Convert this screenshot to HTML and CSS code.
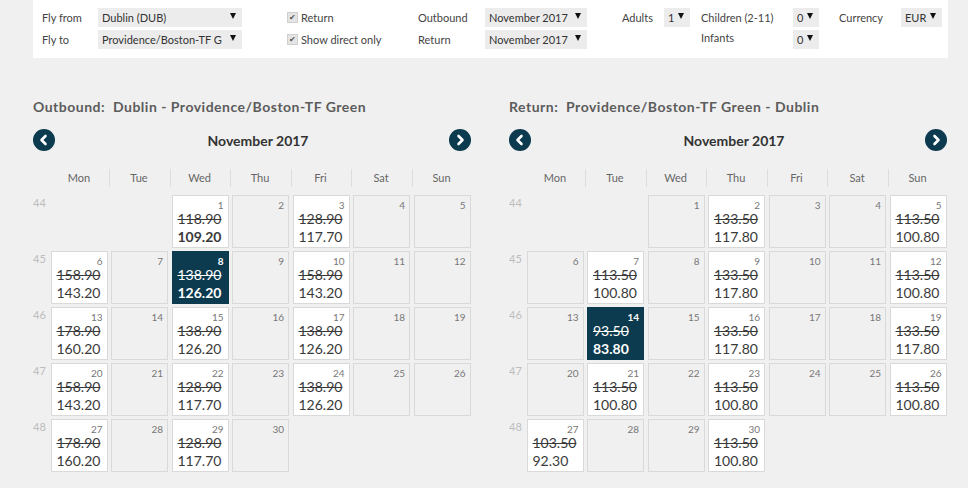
FILE: index.html
```html
<!DOCTYPE html>
<html>
<head>
    <meta charset="UTF-8">
    <title>Flight calendar</title>
    <link rel="stylesheet" href="styles.css">
</head>
<body>
    <div class="search-bar">
        <div class="group g-route">
            <div class="row"><span class="label w56">Fly from</span><span class="select w144">Dublin (DUB)<i></i></span></div>
            <div class="row"><span class="label w56">Fly to</span><span class="select w144">Providence/Boston-TF G<i></i></span></div>
        </div>
        <div class="group g-options">
            <div class="row"><span class="check">✔</span><span class="label">Return</span></div>
            <div class="row"><span class="check">✔</span><span class="label">Show direct only</span></div>
        </div>
        <div class="group g-dates">
            <div class="row"><span class="label w67">Outbound</span><span class="select w102">November 2017<i></i></span></div>
            <div class="row"><span class="label w67">Return</span><span class="select w102">November 2017<i></i></span></div>
        </div>
        <div class="group g-adults">
            <div class="row"><span class="label w42">Adults</span><span class="select w26">1<i></i></span></div>
        </div>
        <div class="group g-kids">
            <div class="row"><span class="label w92">Children (2-11)</span><span class="select w26">0<i></i></span></div>
            <div class="row"><span class="label w92 up">Infants</span><span class="select w26">0<i></i></span></div>
        </div>
        <div class="group g-currency">
            <div class="row"><span class="label w62">Currency</span><span class="select w41">EUR<i></i></span></div>
        </div>
    </div>

    <div class="calendars">
        <div class="calendar" id="outbound">
            <h2>Outbound:&nbsp; Dublin - Providence/Boston-TF Green</h2>
        </div>
        <div class="calendar" id="return">
            <h2>Return:&nbsp; Providence/Boston-TF Green - Dublin</h2>
        </div>
    </div>

    <script>
        // Prices per day: [old price, new price]
        const outbound = {
            selected: 8, cheapest: 1,
            prices: {
                1: ['118.90', '109.20'], 3: ['128.90', '117.70'],
                6: ['158.90', '143.20'], 8: ['138.90', '126.20'], 10: ['158.90', '143.20'],
                13: ['178.90', '160.20'], 15: ['138.90', '126.20'], 17: ['138.90', '126.20'],
                20: ['158.90', '143.20'], 22: ['128.90', '117.70'], 24: ['138.90', '126.20'],
                27: ['178.90', '160.20'], 29: ['128.90', '117.70']
            }
        };
        const inbound = {
            selected: 14, cheapest: null,
            prices: {
                2: ['133.50', '117.80'], 5: ['113.50', '100.80'],
                7: ['113.50', '100.80'], 9: ['133.50', '117.80'], 12: ['113.50', '100.80'],
                14: ['93.50', '83.80'], 16: ['133.50', '117.80'], 19: ['133.50', '117.80'],
                21: ['113.50', '100.80'], 23: ['113.50', '100.80'], 26: ['113.50', '100.80'],
                27: ['103.50', '92.30'], 30: ['113.50', '100.80']
            }
        };

        const days = ['Mon', 'Tue', 'Wed', 'Thu', 'Fri', 'Sat', 'Sun'];
        const arrow = dir => `
            <svg class="nav-btn" width="22" height="22" viewBox="0 0 22 22">
                <circle cx="11" cy="11" r="11" fill="#0c3a4e"/>
                <polyline points="${dir === 'prev' ? '12.5,7 8.5,11 12.5,15' : '9.5,7 13.5,11 9.5,15'}"
                    fill="none" stroke="#fff" stroke-width="2.6" stroke-linecap="round" stroke-linejoin="round"/>
            </svg>`;

        function buildCalendar(el, data) {
            let html = `
                <div class="month-nav">${arrow('prev')}<span class="month">November 2017</span>${arrow('next')}</div>
                <div class="day-head"><span></span>${days.map(d => `<span>${d}</span>`).join('')}</div>
                <div class="grid">`;

            // November 2017 starts on a Wednesday, week 44
            const offset = 2;
            for (let week = 0; week < 5; week++) {
                html += `<div class="week">${44 + week}</div>`;
                for (let col = 0; col < 7; col++) {
                    const day = week * 7 + col - offset + 1;
                    if (day < 1 || day > 30) {
                        html += '<div></div>';
                        continue;
                    }
                    const price = data.prices[day];
                    let cls = 'day';
                    if (price) cls += ' priced';
                    if (day === data.selected) cls += ' selected';
                    if (day === data.cheapest) cls += ' cheapest';
                    html += `<div class="${cls}"><span class="num">${day}</span>`;
                    if (price) {
                        html += `<span class="old">${price[0]}</span><span class="new">${price[1]}</span>`;
                    }
                    html += '</div>';
                }
            }
            el.insertAdjacentHTML('beforeend', html + '</div>');
        }

        buildCalendar(document.getElementById('outbound'), outbound);
        buildCalendar(document.getElementById('return'), inbound);
    </script>
</body>
</html>
```

FILE: styles.css
```css
body {
    margin: 0;
    padding: 0 0 0 33px;
    background-color: #f0f0f0;
    font-family: Lato, "Open Sans", sans-serif;
    color: #333;
}

/* Search form bar */
.search-bar {
    display: flex;
    height: 58px;
    width: 915px;
    padding: 8px 0 0 9px;
    box-sizing: border-box;
    background: #fff;
    font-size: 11px;
    color: #444;
}

.group .row {
    display: flex;
    align-items: center;
    height: 19px;
    margin-bottom: 3px;
}

.g-route { width: 245px; }
.g-options { width: 131px; }
.g-dates { width: 204px; }
.g-adults { width: 79px; }
.g-kids { width: 138px; }

.label { white-space: nowrap; }
.label.up { margin-top: -4px; }
.w42 { width: 42px; }
.w56 { width: 56px; }
.w62 { width: 62px; }
.w67 { width: 67px; }
.w92 { width: 92px; }

.select {
    position: relative;
    display: block;
    height: 19px;
    line-height: 19px;
    padding-left: 4px;
    box-sizing: border-box;
    background: #ececec;
    color: #333;
    white-space: nowrap;
    overflow: hidden;
}

/* dropdown triangle */
.select i {
    position: absolute;
    right: 0;
    top: 0;
    width: 14px;
    height: 19px;
    background: #ececec;
}

.select i::after {
    content: "";
    position: absolute;
    right: 6px;
    top: 5px;
    border-left: 3px solid transparent;
    border-right: 3px solid transparent;
    border-top: 6px solid #111;
}

.w26 { width: 26px; }
.w41 { width: 41px; }
.w102 { width: 102px; }
.w144 { width: 144px; }

.check {
    width: 9px;
    height: 9px;
    margin-right: 3px;
    background: #e4e4e4;
    border: 1px solid #d0d0d0;
    font-size: 8px;
    line-height: 9px;
    text-align: center;
    color: #555;
}

/* Calendars */
.calendars {
    display: flex;
    gap: 38px;
}

.calendar {
    width: 438px;
}

.calendar h2 {
    margin: 40px 0 13px 0;
    font-size: 14px;
    line-height: 18px;
    font-weight: bold;
    color: #5c5c5c;
    letter-spacing: 0.5px;
}

.month-nav {
    display: flex;
    align-items: center;
    justify-content: space-between;
    height: 22px;
}

.month {
    padding-left: 12px;
    font-size: 14px;
    font-weight: bold;
    color: #333;
}

.day-head,
.grid {
    display: grid;
    grid-template-columns: 14px repeat(7, 57px);
    column-gap: 3.5px;
}

.day-head {
    margin-top: 18px;
    height: 18px;
    line-height: 18px;
    font-size: 11px;
    color: #666;
    text-align: center;
}

.day-head span + span + span {
    border-left: 1px solid #ddd;
    margin-left: -2px;
}

.grid {
    margin-top: 8px;
    grid-auto-rows: 53px;
    row-gap: 3px;
}

.week {
    font-size: 11px;
    color: #bdbdbd;
    padding-top: 1px;
}

.day {
    position: relative;
    border: 1px solid #d9d9d9;
    box-sizing: border-box;
    padding: 14px 0 0 5px;
}

.day .num {
    position: absolute;
    top: 3px;
    right: 4px;
    font-size: 10px;
    color: #777;
}

.day.priced {
    background: #fff;
}

.day .old,
.day .new {
    display: block;
    font-size: 14px;
    line-height: 18px;
    color: #3a3a3a;
}

.day .old {
    text-decoration: line-through;
}

.day.cheapest .new {
    font-weight: bold;
}

.day.selected {
    background: #0c3a4e;
    border-color: #0c3a4e;
}

.day.selected .num,
.day.selected .old,
.day.selected .new {
    color: #fff;
}

.day.selected .num,
.day.selected .new {
    font-weight: bold;
}
```
